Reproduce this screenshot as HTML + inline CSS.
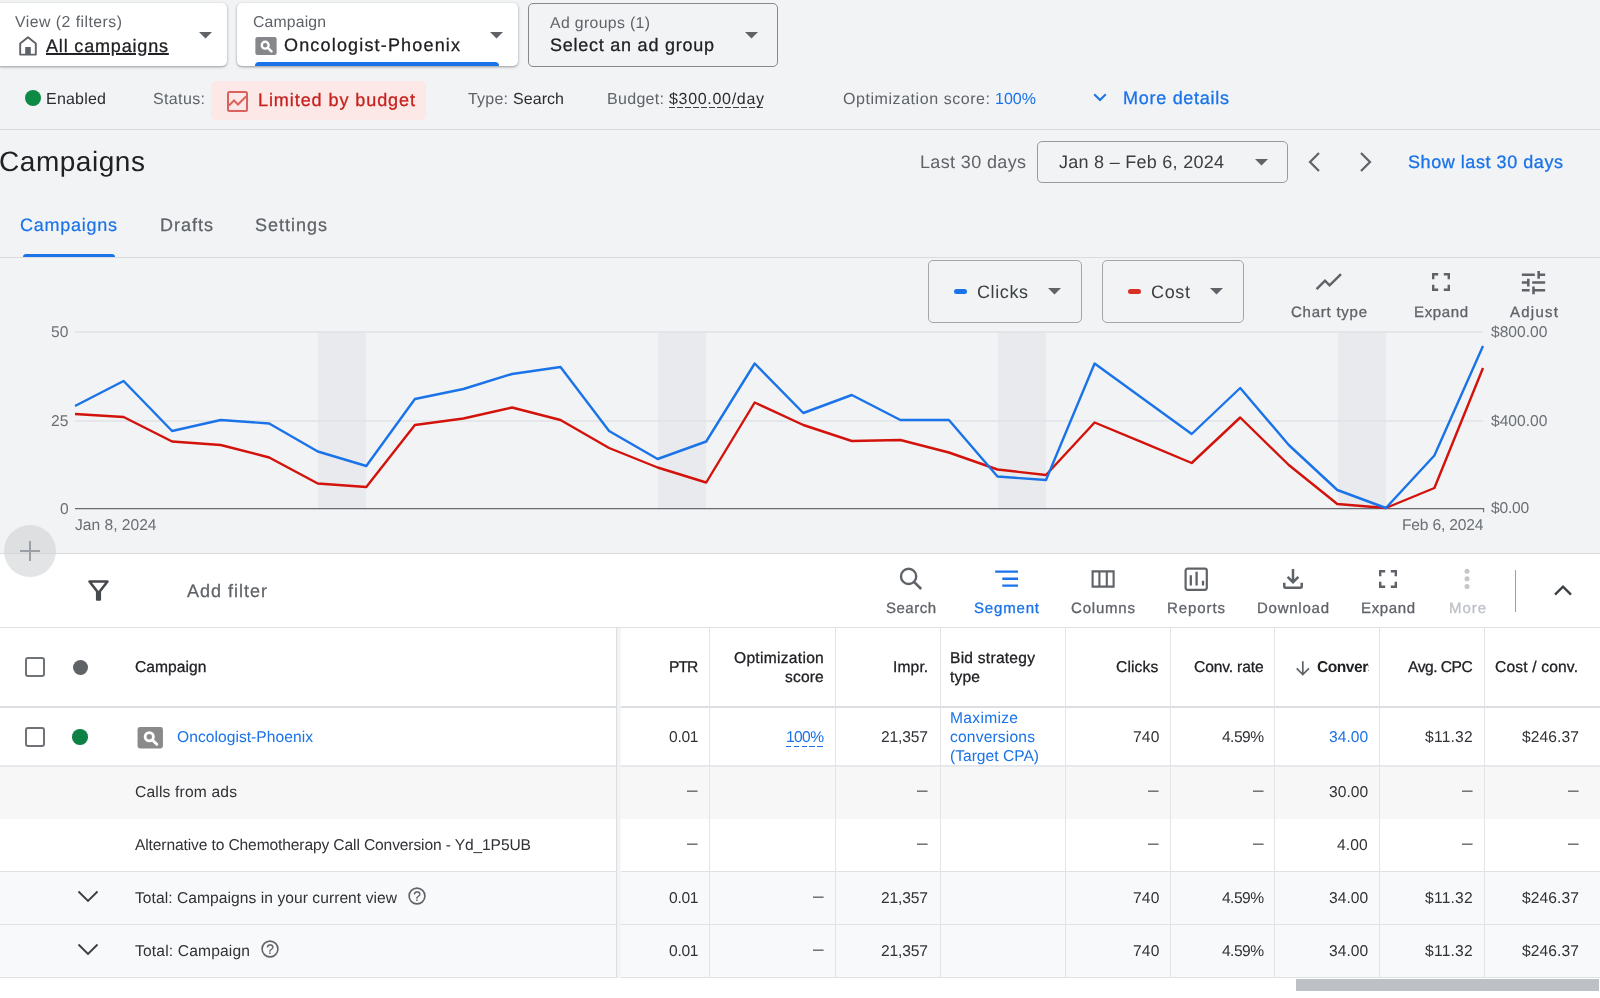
<!DOCTYPE html>
<html lang="en"><head><meta charset="utf-8"><title>Campaigns</title>
<style>
html,body{margin:0;padding:0}
body{width:1600px;height:998px;overflow:hidden;position:relative;background:#f1f3f4;font-family:"Liberation Sans", sans-serif;}
.t{position:absolute;white-space:nowrap;line-height:1;margin:0;padding:0;will-change:transform;text-rendering:geometricPrecision}
svg{position:absolute;overflow:visible}
</style></head><body><main>
<div style="position:absolute;left:-4px;top:3px;width:230.8px;height:63px;background:#fff;border-radius:5px;box-shadow:0 1px 3px rgba(60,64,67,.35),0 1px 2px rgba(60,64,67,.2);"></div>
<div style="position:absolute;left:237px;top:3px;width:281px;height:63px;background:#fff;border-radius:5px;box-shadow:0 1px 3px rgba(60,64,67,.35),0 1px 2px rgba(60,64,67,.2);"></div>
<div style="position:absolute;left:255px;top:62px;width:244px;height:4px;background:#1a73e8;border-radius:4px 4px 0 0;"></div>
<div style="position:absolute;left:528px;top:3px;width:248px;height:61.5px;border:1px solid #85898e;border-radius:5px;"></div>
<svg style="left:198.5px;top:32.25px" width="13" height="6.5" viewBox="0 0 13 6.5"><path d="M0 0H13L6.5 6.5Z" fill="#5f6368"/></svg>
<svg style="left:489.5px;top:32.25px" width="13" height="6.5" viewBox="0 0 13 6.5"><path d="M0 0H13L6.5 6.5Z" fill="#5f6368"/></svg>
<svg style="left:744.5px;top:32.25px" width="13" height="6.5" viewBox="0 0 13 6.5"><path d="M0 0H13L6.5 6.5Z" fill="#5f6368"/></svg>
<svg style="left:18px;top:35px" width="20" height="21" viewBox="0 0 20 21"><path d="M2.2 19.6V8.6L10 2.2l7.8 6.4v11H2.2z" fill="none" stroke="#5f6368" stroke-width="1.9" stroke-linejoin="round"/><rect x="7.2" y="12" width="5.6" height="7.6" fill="#5f6368"/></svg>
<svg style="left:255px;top:37px" width="22" height="18" viewBox="0 0 26 22"><rect x="0" y="0" width="26" height="22" rx="2.5" fill="#85878a"/><circle cx="12" cy="10" r="4.2" fill="none" stroke="#fff" stroke-width="2.9"/><path d="M15.2 13.3l4.5 4.4" stroke="#fff" stroke-width="3" stroke-linecap="round"/></svg>
<div style="position:absolute;left:25px;top:90px;width:16px;height:16px;border-radius:50%;background:#0d8a43"></div>
<div style="position:absolute;left:211px;top:81px;width:215px;height:39px;background:#fce8e6;border-radius:5px;"></div>
<svg style="left:227px;top:91px" width="21" height="21" viewBox="0 0 21 21"><rect x="1" y="1" width="19" height="19" rx="1.5" fill="none" stroke="#d9635c" stroke-width="2"/><path d="M2 14.5l5-5 4 4 8-8" fill="none" stroke="#d9635c" stroke-width="2"/></svg>
<div style="position:absolute;left:669px;top:106.8px;width:96px;height:1.4px;background:repeating-linear-gradient(90deg,#3c4043 0 5.6px,transparent 5.6px 8px)"></div>
<svg style="left:1093px;top:93px" width="14" height="9" viewBox="0 0 14 9"><path d="M1.2 1.2L7 7l5.8-5.8" fill="none" stroke="#1a73e8" stroke-width="2"/></svg>
<div style="position:absolute;left:0px;top:129px;width:1600px;height:1px;background:#dadce0;"></div>
<div style="position:absolute;left:1037px;top:141px;width:249px;height:40px;border:1px solid #979ba0;border-radius:5px;"></div>
<svg style="left:1254.5px;top:158.75px" width="13" height="6.5" viewBox="0 0 13 6.5"><path d="M0 0H13L6.5 6.5Z" fill="#5f6368"/></svg>
<svg style="left:1307px;top:151px" width="14" height="22" viewBox="0 0 14 22"><path d="M12 2L3 11l9 9" fill="none" stroke="#5f6368" stroke-width="2.2"/></svg>
<svg style="left:1359px;top:151px" width="14" height="22" viewBox="0 0 14 22"><path d="M2 2l9 9-9 9" fill="none" stroke="#5f6368" stroke-width="2.2"/></svg>
<div style="position:absolute;left:23px;top:254px;width:92px;height:3.5px;background:#1a73e8;border-radius:3px 3px 0 0;"></div>
<div style="position:absolute;left:0px;top:257px;width:1600px;height:1px;background:#dadce0;"></div>
<div style="position:absolute;left:928px;top:260px;width:152px;height:61px;border:1px solid #a3a6ab;border-radius:5px;"></div>
<div style="position:absolute;left:1102px;top:260px;width:140px;height:61px;border:1px solid #a3a6ab;border-radius:5px;"></div>
<div style="position:absolute;left:954px;top:289px;width:13px;height:5px;background:#1a73e8;border-radius:2.5px;"></div>
<div style="position:absolute;left:1128px;top:289px;width:13px;height:5px;background:#d93025;border-radius:2.5px;"></div>
<svg style="left:1048.0px;top:288.25px" width="13" height="6.5" viewBox="0 0 13 6.5"><path d="M0 0H13L6.5 6.5Z" fill="#5f6368"/></svg>
<svg style="left:1210.0px;top:288.25px" width="13" height="6.5" viewBox="0 0 13 6.5"><path d="M0 0H13L6.5 6.5Z" fill="#5f6368"/></svg>
<svg style="left:1310px;top:268px" width="36" height="28" viewBox="1310 268 36 28"><path d="M1316.6 289.2L1325 280.7L1329.6 285.3L1341 274.2" fill="none" stroke="#5f6368" stroke-width="2.5"/></svg>
<svg style="left:1432.2px;top:273.0px" width="18" height="18" viewBox="0 0 18 18"><path d="M1.2 6.2V1.2H6.2M11.8 1.2H16.8V6.2M16.8 11.8V16.8H11.8M6.2 16.8H1.2V11.8" fill="none" stroke="#5f6368" stroke-width="2.4"/></svg>
<svg style="left:1518.1px;top:266.5px" width="31" height="31" viewBox="0 0 24 24"><path d="M3 17v2h6v-2H3zM3 5v2h10V5H3zm10 16v-2h8v-2h-8v-2h-2v6h2zM7 9v2H3v2h4v2h2V9H7zm14 4v-2H11v2h10zm-6-4h2V7h4V5h-4V3h-2v6z" fill="#5f6368"/></svg>
<div style="position:absolute;left:318px;top:331px;width:48px;height:177px;background:#e8eaed;"></div>
<div style="position:absolute;left:658px;top:331px;width:48px;height:177px;background:#e8eaed;"></div>
<div style="position:absolute;left:998px;top:331px;width:48px;height:177px;background:#e8eaed;"></div>
<div style="position:absolute;left:1338px;top:331px;width:48px;height:177px;background:#e8eaed;"></div>
<svg style="left:0;top:0" width="1600" height="560" viewBox="0 0 1600 560"><path d="M75 331.9H1483M75 420.9H1483" stroke="#e0e2e5" stroke-width="1.5" fill="none"/><path d="M75 508.6H1483.6V512.3" stroke="#676b70" stroke-width="1.1" fill="none"/><polyline points="75.0,414 123.6,417 172.1,441.5 220.7,445 269.2,457.5 317.8,483.5 366.3,487 414.9,425 463.4,418.5 512.0,407.5 560.5,420 609.1,448 657.6,467.5 706.2,482.5 754.7,402.5 803.3,425 851.8,441 900.4,440 948.9,452.5 997.5,469.5 1046.0,475 1094.6,422.5 1143.1,442.7 1191.7,463 1240.2,417.5 1288.8,465 1337.3,504 1385.9,508 1434.4,488 1483.0,368" fill="none" stroke="#d3130b" stroke-width="2.4" stroke-linejoin="round"/><polyline points="75.0,406 123.6,381 172.1,431 220.7,420 269.2,423.5 317.8,451.5 366.3,466 414.9,399 463.4,389 512.0,374 560.5,367 609.1,431 657.6,459 706.2,441.5 754.7,363.5 803.3,413 851.8,395 900.4,420 948.9,420 997.5,476.5 1046.0,480 1094.6,363.5 1143.1,398.7 1191.7,434 1240.2,388 1288.8,445 1337.3,490 1385.9,508 1434.4,455.5 1483.0,346" fill="none" stroke="#1a73e8" stroke-width="2.4" stroke-linejoin="round"/></svg>
<div style="position:absolute;left:0px;top:553px;width:1600px;height:1px;background:#dadce0;"></div>
<div style="position:absolute;left:0px;top:554px;width:1600px;height:444px;background:#fff;"></div>
<div style="position:absolute;left:4px;top:525px;width:52px;height:52px;border-radius:50%;background:rgba(208,210,212,.6)"></div>
<svg style="left:19px;top:540px" width="22" height="22" viewBox="0 0 22 22"><path d="M11 1v20M1 11h20" stroke="#9aa0a6" stroke-width="2" fill="none"/></svg>
<svg style="left:82.8px;top:574.8px" width="31" height="31" viewBox="0 0 24 24"><path d="M7 6h10l-5.01 6.3L7 6zm-2.75-.39C6.27 8.2 10 13 10 13v6c0 .55.45 1 1 1h2c.55 0 1-.45 1-1v-6s3.72-4.8 5.74-7.39c.51-.66.04-1.61-.79-1.61H5.04c-.83 0-1.3.95-.79 1.61z" fill="#45484c"/></svg>
<svg style="left:898px;top:566px" width="26" height="26" viewBox="0 0 26 26"><circle cx="10.6" cy="10.4" r="7.6" fill="none" stroke="#5f6368" stroke-width="2.4"/><path d="M16 15.8l7.2 7.2" stroke="#5f6368" stroke-width="2.6" fill="none"/></svg>
<svg style="left:994px;top:569px" width="26" height="20" viewBox="0 0 26 20"><path d="M1.2 2.6H24M8.3 9.8H24M8.3 16.6H24" stroke="#1a73e8" stroke-width="2.4" fill="none"/></svg>
<svg style="left:1090px;top:569px" width="26" height="20" viewBox="0 0 26 20"><path d="M2.6 2.4H23.6V17.6H2.6ZM9.4 2.4V17.6M16.8 2.4V17.6" stroke="#5f6368" stroke-width="2.1" fill="none"/></svg>
<svg style="left:1183px;top:566px" width="26" height="26" viewBox="0 0 26 26"><rect x="2.6" y="2.6" width="21.2" height="21.2" rx="2" fill="none" stroke="#5f6368" stroke-width="2.2"/><path d="M7.8 9.2V19.4M13.6 5.8V19.4M20 14.8V19.4" stroke="#5f6368" stroke-width="2.3" fill="none"/></svg>
<svg style="left:1278.2px;top:563.7px" width="30" height="30" viewBox="0 0 24 24"><path d="M18 15v3H6v-3H4v3c0 1.1.9 2 2 2h12c1.1 0 2-.9 2-2v-3h-2zm-1-4l-1.41-1.41L13 12.17V4h-2v8.17L8.41 9.59 7 11l5 5 5-5z" fill="#5f6368"/></svg>
<svg style="left:1379.0px;top:570.0px" width="18" height="18" viewBox="0 0 18 18"><path d="M1.2 6.2V1.2H6.2M11.8 1.2H16.8V6.2M16.8 11.8V16.8H11.8M6.2 16.8H1.2V11.8" fill="none" stroke="#5f6368" stroke-width="2.4"/></svg>
<svg style="left:1463px;top:567px" width="8" height="24" viewBox="0 0 8 24"><circle cx="4" cy="4.2" r="2.5" fill="#c4c7ca"/><circle cx="4" cy="11.8" r="2.5" fill="#c4c7ca"/><circle cx="4" cy="19.5" r="2.5" fill="#c4c7ca"/></svg>
<div style="position:absolute;left:1515px;top:570px;width:1px;height:42px;background:#9aa0a6;"></div>
<svg style="left:1553px;top:583px" width="20" height="14" viewBox="0 0 20 14"><path d="M2 11.6L10 3.6L18 11.6" stroke="#3c4043" stroke-width="2.3" fill="none"/></svg>
<div style="position:absolute;left:0px;top:627px;width:1600px;height:1px;background:#e0e0e0;"></div>
<div style="position:absolute;left:0px;top:766.6px;width:1600px;height:52.2px;background:#f7f7f7;"></div>
<div style="position:absolute;left:0px;top:871px;width:1600px;height:106px;background:#f8f9fa;"></div>
<div style="position:absolute;left:0px;top:706.3px;width:1600px;height:2.2px;background:#dcdee1;"></div>
<div style="position:absolute;left:0px;top:765.4px;width:1600px;height:1.5px;background:#e6e8eb;"></div>
<div style="position:absolute;left:0px;top:870.9px;width:1600px;height:1.1px;background:#dfe1e5;"></div>
<div style="position:absolute;left:0px;top:923.9px;width:1600px;height:1.1px;background:#dfe1e5;"></div>
<div style="position:absolute;left:0px;top:976.9px;width:1600px;height:1.1px;background:#dfe1e5;"></div>
<div style="position:absolute;left:709.0px;top:628px;width:1.1px;height:350px;background:#e2e4e7;"></div>
<div style="position:absolute;left:834.8px;top:628px;width:1.1px;height:350px;background:#e2e4e7;"></div>
<div style="position:absolute;left:939.8px;top:628px;width:1.1px;height:350px;background:#e2e4e7;"></div>
<div style="position:absolute;left:1064.8px;top:628px;width:1.1px;height:350px;background:#e2e4e7;"></div>
<div style="position:absolute;left:1169.5px;top:628px;width:1.1px;height:350px;background:#e2e4e7;"></div>
<div style="position:absolute;left:1274.0px;top:628px;width:1.1px;height:350px;background:#e2e4e7;"></div>
<div style="position:absolute;left:1379.0px;top:628px;width:1.1px;height:350px;background:#e2e4e7;"></div>
<div style="position:absolute;left:1483.8px;top:628px;width:1.1px;height:350px;background:#e2e4e7;"></div>
<div style="position:absolute;left:615.6px;top:628px;width:1.2px;height:350px;background:#dcdee1;"></div>
<div style="position:absolute;left:616.8px;top:628px;width:5px;height:350px;background:linear-gradient(90deg,#eff0f1 0,#f3f4f5 50%,rgba(255,255,255,0) 100%);"></div>
<div style="position:absolute;left:1296px;top:978.7px;width:302.5px;height:12.3px;background:#bdc1c6;"></div>
<div style="position:absolute;left:25.2px;top:657px;width:16px;height:16px;border:2px solid #6f7378;border-radius:3px;background:#fff;"></div>
<div style="position:absolute;left:25.2px;top:727px;width:16px;height:16px;border:2px solid #6f7378;border-radius:3px;background:#fff;"></div>
<div style="position:absolute;left:72.5px;top:659.5px;width:15.5px;height:15.5px;border-radius:50%;background:#5f6368"></div>
<div style="position:absolute;left:72px;top:729px;width:15.5px;height:15.5px;border-radius:50%;background:#0d8043"></div>
<svg style="left:137px;top:726.5px" width="26.5" height="21.5" viewBox="0 0 26 22"><rect x="0" y="0" width="26" height="22" rx="2.5" fill="#8a8a8a"/><circle cx="12" cy="10" r="4.2" fill="none" stroke="#fff" stroke-width="2.9"/><path d="M15.2 13.3l4.5 4.4" stroke="#fff" stroke-width="3" stroke-linecap="round"/></svg>
<svg style="left:1290px;top:655px" width="26" height="26" viewBox="1290 655 26 26"><path d="M1302.8 661.3V674.2M1296.7 668.3L1302.8 674.5L1308.9 668.3" stroke="#5f6368" stroke-width="1.7" fill="none"/></svg>
<div style="position:absolute;left:786px;top:745.5px;width:38px;height:1.4px;background:repeating-linear-gradient(90deg,#1a73e8 0 5.4px,transparent 5.4px 7.8px)"></div>
<svg style="left:77px;top:890px" width="22" height="13" viewBox="0 0 22 13"><path d="M1.5 1.5L11 11L20.5 1.5" stroke="#3c4043" stroke-width="1.9" fill="none"/></svg>
<svg style="left:77px;top:943px" width="22" height="13" viewBox="0 0 22 13"><path d="M1.5 1.5L11 11L20.5 1.5" stroke="#3c4043" stroke-width="1.9" fill="none"/></svg>
<svg style="left:407.2px;top:885.9px" width="20" height="20" viewBox="0 0 20 20"><circle cx="10" cy="10" r="7.9" fill="none" stroke="#5f6368" stroke-width="1.6"/></svg>
<svg style="left:259.8px;top:938.9px" width="20" height="20" viewBox="0 0 20 20"><circle cx="10" cy="10" r="7.9" fill="none" stroke="#5f6368" stroke-width="1.6"/></svg>
<div class="t" style="left:15px;top:15.00px;font-size:15.8px;font-weight:400;color:#5f6368;letter-spacing:0.481px;">View (2 filters)</div>
<div class="t" style="left:46px;top:37.00px;font-size:18px;font-weight:400;color:#202124;letter-spacing:0.828px;text-decoration:underline;text-underline-offset:1.2px;text-decoration-thickness:1.5px;-webkit-text-stroke:.28px #202124;">All campaigns</div>
<div class="t" style="left:253px;top:15.00px;font-size:15.8px;font-weight:400;color:#5f6368;letter-spacing:0.141px;">Campaign</div>
<div class="t" style="left:284px;top:36.00px;font-size:18px;font-weight:400;color:#202124;letter-spacing:1.171px;-webkit-text-stroke:.28px #202124;">Oncologist-Phoenix</div>
<div class="t" style="left:550px;top:16.00px;font-size:15.8px;font-weight:400;color:#5f6368;letter-spacing:0.357px;">Ad groups (1)</div>
<div class="t" style="left:550px;top:36.00px;font-size:18px;font-weight:400;color:#202124;letter-spacing:0.757px;-webkit-text-stroke:.28px #202124;">Select an ad group</div>
<div class="t" style="left:46px;top:92.00px;font-size:16px;font-weight:400;color:#2a2c30;letter-spacing:0.214px;">Enabled</div>
<div class="t" style="left:153px;top:92.00px;font-size:16px;font-weight:400;color:#5f6368;letter-spacing:0.365px;">Status:</div>
<div class="t" style="left:258px;top:91.00px;font-size:18px;font-weight:400;color:#c5221f;letter-spacing:0.932px;-webkit-text-stroke:.3px #c5221f;">Limited by budget</div>
<div class="t" style="left:468px;top:92.00px;font-size:16px;font-weight:400;color:#5f6368;letter-spacing:0.215px;">Type:</div>
<div class="t" style="left:513px;top:92.00px;font-size:16px;font-weight:400;color:#2a2c30;letter-spacing:0.059px;">Search</div>
<div class="t" style="left:607px;top:92.00px;font-size:16px;font-weight:400;color:#5f6368;letter-spacing:0.307px;">Budget:</div>
<div class="t" style="left:669px;top:92.00px;font-size:16px;font-weight:400;color:#2a2c30;letter-spacing:0.692px;">$300.00/day</div>
<div class="t" style="left:843px;top:92.00px;font-size:16px;font-weight:400;color:#5f6368;letter-spacing:0.559px;">Optimization score:</div>
<div class="t" style="left:995px;top:92.00px;font-size:16px;font-weight:400;color:#1a73e8;letter-spacing:0.026px;">100%</div>
<div class="t" style="left:1123px;top:89.00px;font-size:18px;font-weight:400;color:#1a73e8;letter-spacing:0.723px;-webkit-text-stroke:.3px #1a73e8;">More details</div>
<div class="t" style="left:-1px;top:148.00px;font-size:28px;font-weight:400;color:#202124;letter-spacing:0.545px;">Campaigns</div>
<div class="t" style="left:920px;top:153.00px;font-size:18px;font-weight:400;color:#5f6368;letter-spacing:0.357px;">Last 30 days</div>
<div class="t" style="left:1059px;top:153.00px;font-size:18px;font-weight:400;color:#3c4043;letter-spacing:0.271px;">Jan 8 – Feb 6, 2024</div>
<div class="t" style="left:1408px;top:153.00px;font-size:18px;font-weight:400;color:#1a73e8;letter-spacing:0.557px;-webkit-text-stroke:.3px #1a73e8;">Show last 30 days</div>
<div class="t" style="left:20px;top:216.00px;font-size:18px;font-weight:400;color:#1a73e8;letter-spacing:0.744px;-webkit-text-stroke:.2px #1a73e8;">Campaigns</div>
<div class="t" style="left:160px;top:216.00px;font-size:18px;font-weight:400;color:#5f6368;letter-spacing:0.997px;-webkit-text-stroke:.25px #5f6368;">Drafts</div>
<div class="t" style="left:255px;top:216.00px;font-size:18px;font-weight:400;color:#5f6368;letter-spacing:0.993px;-webkit-text-stroke:.25px #5f6368;">Settings</div>
<div class="t" style="left:977px;top:283.00px;font-size:18px;font-weight:400;color:#3c4043;letter-spacing:0.600px;">Clicks</div>
<div class="t" style="left:1151px;top:283.00px;font-size:18px;font-weight:400;color:#3c4043;letter-spacing:0.661px;">Cost</div>
<div class="t" style="left:1291px;top:305.00px;font-size:15px;font-weight:400;color:#5f6368;letter-spacing:0.755px;-webkit-text-stroke:.3px #5f6368;">Chart type</div>
<div class="t" style="left:1414px;top:305.00px;font-size:15px;font-weight:400;color:#5f6368;letter-spacing:0.625px;-webkit-text-stroke:.3px #5f6368;">Expand</div>
<div class="t" style="left:1510px;top:305.00px;font-size:15px;font-weight:400;color:#5f6368;letter-spacing:1.259px;-webkit-text-stroke:.3px #5f6368;">Adjust</div>
<div class="t" style="right:1531.30px;top:325.00px;font-size:15.6px;font-weight:400;color:#6b6f74;">50</div>
<div class="t" style="right:1531.30px;top:414.00px;font-size:15.6px;font-weight:400;color:#6b6f74;">25</div>
<div class="t" style="right:1531.30px;top:502.00px;font-size:15.6px;font-weight:400;color:#6b6f74;">0</div>
<div class="t" style="left:1490.8px;top:325.00px;font-size:15.6px;font-weight:400;color:#6b6f74;letter-spacing:0.004px;">$800.00</div>
<div class="t" style="left:1490.8px;top:414.00px;font-size:15.6px;font-weight:400;color:#6b6f74;letter-spacing:0.004px;">$400.00</div>
<div class="t" style="left:1490.8px;top:501.00px;font-size:15.6px;font-weight:400;color:#6b6f74;letter-spacing:-0.208px;">$0.00</div>
<div class="t" style="left:75px;top:518.00px;font-size:15.6px;font-weight:400;color:#6b6f74;letter-spacing:-0.002px;">Jan 8, 2024</div>
<div class="t" style="left:1402.3px;top:518.00px;font-size:15.6px;font-weight:400;color:#6b6f74;letter-spacing:-0.173px;">Feb 6, 2024</div>
<div class="t" style="left:187px;top:582.00px;font-size:18px;font-weight:400;color:#5f6368;letter-spacing:0.995px;-webkit-text-stroke:.25px #5f6368;">Add filter</div>
<div class="t" style="left:886px;top:601.00px;font-size:15px;font-weight:400;color:#5f6368;letter-spacing:0.494px;-webkit-text-stroke:.3px #5f6368;">Search</div>
<div class="t" style="left:974px;top:601.00px;font-size:15px;font-weight:400;color:#1a73e8;letter-spacing:0.826px;-webkit-text-stroke:.3px #1a73e8;">Segment</div>
<div class="t" style="left:1071px;top:601.00px;font-size:15px;font-weight:400;color:#5f6368;letter-spacing:0.802px;-webkit-text-stroke:.3px #5f6368;">Columns</div>
<div class="t" style="left:1167px;top:601.00px;font-size:15px;font-weight:400;color:#5f6368;letter-spacing:0.911px;-webkit-text-stroke:.3px #5f6368;">Reports</div>
<div class="t" style="left:1257px;top:601.00px;font-size:15px;font-weight:400;color:#5f6368;letter-spacing:0.754px;-webkit-text-stroke:.3px #5f6368;">Download</div>
<div class="t" style="left:1361px;top:601.00px;font-size:15px;font-weight:400;color:#5f6368;letter-spacing:0.625px;-webkit-text-stroke:.3px #5f6368;">Expand</div>
<div class="t" style="left:1449px;top:601.00px;font-size:15px;font-weight:400;color:#bdc1c6;letter-spacing:0.938px;-webkit-text-stroke:.3px #bdc1c6;">More</div>
<div class="t" style="left:135px;top:660.00px;font-size:15.6px;font-weight:400;color:#202124;letter-spacing:0.060px;-webkit-text-stroke:.28px #202124;">Campaign</div>
<div class="t" style="right:902.99px;top:660.00px;font-size:15.6px;font-weight:400;color:#202124;letter-spacing:-0.994px;-webkit-text-stroke:.28px #202124;">PTR</div>
<div class="t" style="right:775.72px;top:651.00px;font-size:15.6px;font-weight:400;color:#202124;letter-spacing:0.284px;-webkit-text-stroke:.28px #202124;">Optimization</div>
<div class="t" style="right:775.84px;top:670.00px;font-size:15.6px;font-weight:400;color:#202124;letter-spacing:0.165px;-webkit-text-stroke:.28px #202124;">score</div>
<div class="t" style="right:671.57px;top:660.00px;font-size:15.6px;font-weight:400;color:#202124;letter-spacing:0.132px;-webkit-text-stroke:.28px #202124;">Impr.</div>
<div class="t" style="left:950.2px;top:651.00px;font-size:15.6px;font-weight:400;color:#202124;letter-spacing:0.241px;-webkit-text-stroke:.28px #202124;">Bid strategy</div>
<div class="t" style="left:950.2px;top:670.00px;font-size:15.6px;font-weight:400;color:#202124;letter-spacing:0.172px;-webkit-text-stroke:.28px #202124;">type</div>
<div class="t" style="right:441.28px;top:660.00px;font-size:15.6px;font-weight:400;color:#202124;letter-spacing:0.121px;-webkit-text-stroke:.28px #202124;">Clicks</div>
<div class="t" style="right:336.83px;top:660.00px;font-size:15.6px;font-weight:400;color:#202124;letter-spacing:-0.131px;-webkit-text-stroke:.28px #202124;">Conv. rate</div>
<div class="t" style="left:1317px;top:660.00px;font-size:15.6px;font-weight:700;color:#202124;letter-spacing:-.5px;width:51.7px;overflow:hidden;">Conversions</div>
<div class="t" style="right:127.78px;top:660.00px;font-size:15.6px;font-weight:400;color:#202124;letter-spacing:-0.484px;-webkit-text-stroke:.28px #202124;">Avg. CPC</div>
<div class="t" style="right:21.54px;top:660.00px;font-size:15.6px;font-weight:400;color:#202124;letter-spacing:0.165px;-webkit-text-stroke:.28px #202124;">Cost / conv.</div>
<div class="t" style="left:177px;top:730.00px;font-size:15.6px;font-weight:400;color:#1a73e8;letter-spacing:0.045px;">Oncologist-Phoenix</div>
<div class="t" style="right:902.29px;top:730.00px;font-size:15.6px;font-weight:400;color:#303236;letter-spacing:-0.286px;">0.01</div>
<div class="t" style="right:672.14px;top:730.00px;font-size:15.6px;font-weight:400;color:#303236;letter-spacing:-0.141px;">21,357</div>
<div class="t" style="right:440.82px;top:730.00px;font-size:15.6px;font-weight:400;color:#303236;letter-spacing:0.184px;">740</div>
<div class="t" style="right:336.55px;top:730.00px;font-size:15.6px;font-weight:400;color:#303236;letter-spacing:-0.555px;">4.59%</div>
<div class="t" style="right:126.77px;top:730.00px;font-size:15.6px;font-weight:400;color:#303236;letter-spacing:0.231px;">$11.32</div>
<div class="t" style="right:20.90px;top:730.00px;font-size:15.6px;font-weight:400;color:#303236;letter-spacing:0.104px;">$246.37</div>
<div class="t" style="right:776.63px;top:730.00px;font-size:15.6px;font-weight:400;color:#1a73e8;letter-spacing:-0.630px;">100%</div>
<div class="t" style="right:231.96px;top:730.00px;font-size:15.6px;font-weight:400;color:#1a73e8;letter-spacing:0.042px;">34.00</div>
<div class="t" style="left:950.2px;top:711.00px;font-size:15.6px;font-weight:400;color:#1a73e8;letter-spacing:0.306px;">Maximize</div>
<div class="t" style="left:950.2px;top:730.00px;font-size:15.6px;font-weight:400;color:#1a73e8;letter-spacing:0.178px;">conversions</div>
<div class="t" style="left:950.2px;top:749.00px;font-size:15.6px;font-weight:400;color:#1a73e8;letter-spacing:0.003px;">(Target CPA)</div>
<div class="t" style="left:135.3px;top:785.00px;font-size:15.6px;font-weight:400;color:#303236;letter-spacing:0.180px;">Calls from ads</div>
<div class="t" style="right:902.40px;top:781.00px;font-size:19px;font-weight:400;color:#55595e;">–</div>
<div class="t" style="right:672.40px;top:781.00px;font-size:19px;font-weight:400;color:#55595e;">–</div>
<div class="t" style="right:441.40px;top:781.00px;font-size:19px;font-weight:400;color:#55595e;">–</div>
<div class="t" style="right:336.40px;top:781.00px;font-size:19px;font-weight:400;color:#55595e;">–</div>
<div class="t" style="right:231.96px;top:785.00px;font-size:15.6px;font-weight:400;color:#303236;letter-spacing:0.042px;">30.00</div>
<div class="t" style="right:127.40px;top:781.00px;font-size:19px;font-weight:400;color:#55595e;">–</div>
<div class="t" style="right:21.40px;top:781.00px;font-size:19px;font-weight:400;color:#55595e;">–</div>
<div class="t" style="left:135.3px;top:838.00px;font-size:15.6px;font-weight:400;color:#303236;letter-spacing:-0.128px;">Alternative to Chemotherapy Call Conversion - Yd_1P5UB</div>
<div class="t" style="right:902.40px;top:834.00px;font-size:19px;font-weight:400;color:#55595e;">–</div>
<div class="t" style="right:672.40px;top:834.00px;font-size:19px;font-weight:400;color:#55595e;">–</div>
<div class="t" style="right:441.40px;top:834.00px;font-size:19px;font-weight:400;color:#55595e;">–</div>
<div class="t" style="right:336.40px;top:834.00px;font-size:19px;font-weight:400;color:#55595e;">–</div>
<div class="t" style="right:231.85px;top:838.00px;font-size:15.6px;font-weight:400;color:#303236;letter-spacing:0.147px;">4.00</div>
<div class="t" style="right:127.40px;top:834.00px;font-size:19px;font-weight:400;color:#55595e;">–</div>
<div class="t" style="right:21.40px;top:834.00px;font-size:19px;font-weight:400;color:#55595e;">–</div>
<div class="t" style="left:135.3px;top:891.00px;font-size:15.6px;font-weight:400;color:#303236;letter-spacing:0.055px;">Total: Campaigns in your current view</div>
<div class="t" style="left:417.3px;transform:translateX(-50%);top:890.00px;font-size:13.8px;font-weight:400;color:#5f6368;-webkit-text-stroke:.2px #5f6368;">?</div>
<div class="t" style="right:902.29px;top:891.00px;font-size:15.6px;font-weight:400;color:#303236;letter-spacing:-0.286px;">0.01</div>
<div class="t" style="right:776.40px;top:887.00px;font-size:19px;font-weight:400;color:#55595e;">–</div>
<div class="t" style="right:672.14px;top:891.00px;font-size:15.6px;font-weight:400;color:#303236;letter-spacing:-0.141px;">21,357</div>
<div class="t" style="right:440.82px;top:891.00px;font-size:15.6px;font-weight:400;color:#303236;letter-spacing:0.184px;">740</div>
<div class="t" style="right:336.55px;top:891.00px;font-size:15.6px;font-weight:400;color:#303236;letter-spacing:-0.555px;">4.59%</div>
<div class="t" style="right:231.96px;top:891.00px;font-size:15.6px;font-weight:400;color:#303236;letter-spacing:0.042px;">34.00</div>
<div class="t" style="right:126.77px;top:891.00px;font-size:15.6px;font-weight:400;color:#303236;letter-spacing:0.231px;">$11.32</div>
<div class="t" style="right:20.90px;top:891.00px;font-size:15.6px;font-weight:400;color:#303236;letter-spacing:0.104px;">$246.37</div>
<div class="t" style="left:135.3px;top:944.00px;font-size:15.6px;font-weight:400;color:#303236;letter-spacing:0.165px;">Total: Campaign</div>
<div class="t" style="left:269.90000000000003px;transform:translateX(-50%);top:943.00px;font-size:13.8px;font-weight:400;color:#5f6368;-webkit-text-stroke:.2px #5f6368;">?</div>
<div class="t" style="right:902.29px;top:944.00px;font-size:15.6px;font-weight:400;color:#303236;letter-spacing:-0.286px;">0.01</div>
<div class="t" style="right:776.40px;top:940.00px;font-size:19px;font-weight:400;color:#55595e;">–</div>
<div class="t" style="right:672.14px;top:944.00px;font-size:15.6px;font-weight:400;color:#303236;letter-spacing:-0.141px;">21,357</div>
<div class="t" style="right:440.82px;top:944.00px;font-size:15.6px;font-weight:400;color:#303236;letter-spacing:0.184px;">740</div>
<div class="t" style="right:336.55px;top:944.00px;font-size:15.6px;font-weight:400;color:#303236;letter-spacing:-0.555px;">4.59%</div>
<div class="t" style="right:231.96px;top:944.00px;font-size:15.6px;font-weight:400;color:#303236;letter-spacing:0.042px;">34.00</div>
<div class="t" style="right:126.77px;top:944.00px;font-size:15.6px;font-weight:400;color:#303236;letter-spacing:0.231px;">$11.32</div>
<div class="t" style="right:20.90px;top:944.00px;font-size:15.6px;font-weight:400;color:#303236;letter-spacing:0.104px;">$246.37</div>
</main></body></html>
